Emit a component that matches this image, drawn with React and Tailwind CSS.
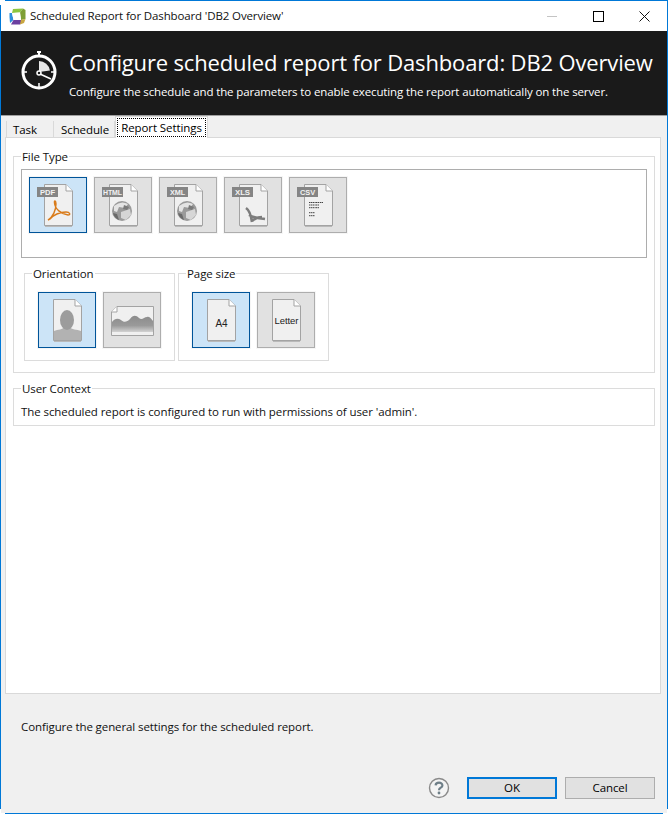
import React from "react";

function AppLogo() {
    return (
        <svg width="17" height="17" viewBox="0 0 17 17">
            <path d="M4 1 L14 0.5 L11 4.5 L3 5 Z" fill="#8cc63f" />
            <path d="M11 4.5 L14 0.5 L16.5 2 L16.5 11 L12 12 Z" fill="#7f9f35" />
            <path d="M0.5 5 L3 5 L4.5 12 L1 15 L0.5 9 Z" fill="#2d8fdc" />
            <path d="M3 5 L11 4.5 L12 12 L4.5 12 Z" fill="#ffffff" />
            <path d="M4.5 12 L12 12 L14 13 L11 16.5 L2 16.5 Z" fill="#6b3fa0" />
            <path d="M12 12 L16.5 11 L15 15 L11 16.5 Z" fill="#c9a640" />
        </svg>
    );
}

function Stopwatch() {
    return (
        <svg width="40" height="44" viewBox="0 0 40 44" className="text-white">
            <rect x="18" y="2" width="4" height="2" fill="currentColor" />
            <rect x="19" y="3" width="2" height="3" fill="currentColor" />
            <circle cx="20" cy="23" r="16" fill="none" stroke="currentColor" strokeWidth="3" />
            <path d="M20 12 A11.5 11.5 0 0 1 31 21.5 L20 23 Z" fill="currentColor" opacity="0.9" />
            <path d="M20 34 V38 M5 23 H8 M32 23 H35" stroke="currentColor" strokeWidth="1.5" />
            <circle cx="20" cy="24" r="2" fill="#1a1a1a" stroke="currentColor" strokeWidth="1.5" />
            <path d="M21 25 L32 30" stroke="currentColor" strokeWidth="1.5" />
        </svg>
    );
}

function Doc({ children }) {
    return (
        <g>
            <path d="M15.5 7.5 H37 L43.5 14 V48.5 H15.5 Z" fill="#f0f0f0" stroke="#a3a3a3" />
            <path d="M37 7.5 V14 H43.5" fill="#ffffff" stroke="#a3a3a3" />
            <path d="M16 49.5 H43" stroke="#b9b9b9" />
            {children}
        </g>
    );
}

function Tag({ text }) {
    return (
        <g>
            <rect x="8" y="10" width="21" height="10" fill="#858585" />
            <text x="18.5" y="18" textAnchor="middle" fontSize="8" fontWeight="700" fill="#f2f2f2" fontFamily="Liberation Sans, sans-serif" textLength={text.length > 3 ? 19 : 15} lengthAdjust="spacingAndGlyphs">{text}</text>
        </g>
    );
}

function Globe() {
    return (
        <g>
            <circle cx="28" cy="34" r="10" fill="#9a9a9a" />
            <path d="M20 29 Q27 23 34 27 L31 31 L25 30 L23 35 L20 34 Z" fill="#e4e4e4" />
            <path d="M27 35 L36 32 L37 38 L32 43 L27 41 Z" fill="#d6d6d6" />
            <path d="M19 36 L23 37 L25 43 Q20 41 19 36 Z" fill="#6a6a6a" />
            <path d="M30 28 L35 30 L33 33 L29 32 Z" fill="#7a7a7a" />
        </g>
    );
}

const ICONS = {
    pdf: (
        <Doc>
            <Tag text="PDF" />
            <path d="M19 43 C24 40 27 33 27 27 C27 23 25 23 25.5 26 C26 32 32 37 39 38 C42 38 41 35 37 35 C31 35 24 38 21 42 Z" fill="none" stroke="#d97b1a" strokeWidth="1.4" />
        </Doc>
    ),
    html: <Doc><Tag text="HTML" /><Globe /></Doc>,
    xml: <Doc><Tag text="XML" /><Globe /></Doc>,
    xls: (
        <Doc>
            <Tag text="XLS" />
            <path d="M22 31 C25 33 27 38 28 45 M25 38 C30 41 35 41 41 42 M28 44 C31 41 34 40 38 40" fill="none" stroke="#7d7d7d" strokeWidth="2.6" />
        </Doc>
    ),
    csv: (
        <Doc>
            <Tag text="CSV" />
            <path d="M20 25.5 H26.7 M27 25.5 H30.3 M31 25.5 H34 M20 28 H26.7 M27 28 H30 M20 30.7 H26.7 M27 30.7 H30 M20 35.7 H26 M20 38.7 H26" stroke="#444444" strokeWidth="1" strokeDasharray="1.5 0.5" />
        </Doc>
    ),
    portrait: (
        <Doc>
            <path d="M16 48 V39 C20 37 25 38 26 35 H32 C33 38 39 37 43 39 V48 Z" fill="#b2b2b2" />
            <ellipse cx="29" cy="28" rx="7" ry="10" fill="#9c9c9c" />
        </Doc>
    ),
    landscape: (
        <g>
            <defs>
                <linearGradient id="ridge" x1="0" y1="0" x2="0" y2="1">
                    <stop offset="0" stopColor="#8c8c8c" />
                    <stop offset="0.6" stopColor="#9a9a9a" />
                    <stop offset="1" stopColor="#d2d2d2" />
                </linearGradient>
            </defs>
            <path d="M14 14.5 H50.5 V43.5 H8.5 V20 Z" fill="#f0f0f0" stroke="#a3a3a3" />
            <path d="M14 14.5 V20 H8.5" fill="#ffffff" stroke="#a3a3a3" />
            <path d="M9 30 C12 26 15 26 18 28 C21 31 24 30 27 27 C30 23 33 23 36 26 C39 29 41 25 44 25 C47 24 48 27 50 29 V40 H9 Z" fill="url(#ridge)" />
        </g>
    ),
    a4: (
        <Doc>
            <text x="29.5" y="35" textAnchor="middle" fontSize="10" fill="#222222" fontFamily="Liberation Sans, sans-serif">A4</text>
        </Doc>
    ),
    letter: (
        <Doc>
            <text x="29.5" y="32" textAnchor="middle" fontSize="9.5" fill="#222222" fontFamily="Liberation Sans, sans-serif">Letter</text>
        </Doc>
    ),
};

function IconButton({ icon, selected }) {
    return (
        <button className={`w-[58px] h-[56px] border shadow-[0_0_0_1px_#f6f6f6] ${selected ? "bg-[#cce4f7] border-[#005499]" : "bg-[#e1e1e1] border-[#adadad]"}`}>
            <svg width="58" height="56" viewBox="0 0 58 56" className="-m-px">{ICONS[icon]}</svg>
        </button>
    );
}

function Group({ title, className, children }) {
    return (
        <fieldset className={`border border-[#dcdcdc] ${className}`}>
            <legend className="ml-[7px] px-[1px] h-4 leading-[18px] text-[#111111]">{title}</legend>
            {children}
        </fieldset>
    );
}

export default function App() {
    return (
        <div className="relative w-[668px] h-[814px] flex flex-col border border-[#0078d7] bg-[#f0f0f0] text-[11.5px] tracking-[-0.09px] text-black" style={{ fontFamily: "'Open Sans', sans-serif" }}>
            {/* the capture cuts the window's corners */}
            <span className="absolute -top-px -left-px w-[5px] h-px bg-white" />
            <span className="absolute -top-px -left-px w-px h-[5px] bg-white" />
            <span className="absolute -bottom-px -left-px w-[5px] h-px bg-white" />
            <span className="absolute -bottom-px -left-px w-px h-[5px] bg-white" />
            <span className="absolute -bottom-px -right-px w-[5px] h-px bg-white" />
            <span className="absolute -bottom-px -right-px w-px h-[5px] bg-white" />

            <div className="h-[30px] bg-white flex items-center shrink-0">
                <div className="ml-[8px] mr-[4px] flex"><AppLogo /></div>
                <div className="flex-1 text-[#111111] tracking-[-0.13px]">Scheduled Report for Dashboard 'DB2 Overview'</div>
                <div className="w-[46px] flex justify-center"><div className="w-[10px] h-px bg-[#c4c4c4]" /></div>
                <div className="w-[46px] flex justify-center"><div className="w-[11px] h-[11px] border border-black" /></div>
                <div className="w-[46px] flex justify-center">
                    <svg width="11" height="11" viewBox="0 0 11 11"><path d="M0.5 0.5 L10.5 10.5 M10.5 0.5 L0.5 10.5" stroke="#111111" /></svg>
                </div>
            </div>

            <div className="h-[85px] bg-[#1a1a1a] border-b border-[#a0a0a0] flex shrink-0 text-white">
                <div className="ml-[18px] mt-[18px] w-[40px] shrink-0"><Stopwatch /></div>
                <div className="ml-[10px]">
                    <div className="mt-[16px] text-[22px] tracking-[-0.15px] leading-[30px] whitespace-nowrap">Configure scheduled report for Dashboard: DB2 Overview</div>
                    <div className="mt-[7px] leading-4 whitespace-nowrap tracking-[-0.12px]">Configure the schedule and the parameters to enable executing the report automatically on the server.</div>
                </div>
            </div>

            <div className="h-[22px] flex items-end pl-[5px] shrink-0 relative z-10 -mb-px">
                <div className="w-[48px] h-[17px] border-l border-r border-[#d9d9d9] pl-[6px] leading-[18px]">Task</div>
                <div className="w-[61px] h-[17px] border-r border-[#d9d9d9] pl-[7px] leading-[18px]">Schedule</div>
                <div className="w-[93px] h-[22px] bg-white border border-b-0 border-[#d9d9d9] p-[1px]">
                    <div className="h-[19px] border border-dotted border-black text-center leading-[18px]">Report Settings</div>
                </div>
            </div>

            <div className="flex-1 ml-[4px] mr-[6px] bg-white border border-[#d9d9d9] pl-[7px] pr-[5px] pt-[10px] flex flex-col">
                <Group title="File Type" className="pb-[11px]">
                    <div className="mx-[7px] mt-[5px] h-[89px] border border-[#adadad] p-[7px] flex gap-[7px] items-start">
                        <IconButton icon="pdf" selected />
                        <IconButton icon="html" />
                        <IconButton icon="xml" />
                        <IconButton icon="xls" />
                        <IconButton icon="csv" />
                    </div>
                    <div className="ml-[10px] mt-[7px] flex gap-[3px]">
                        <Group title="Orientation" className="w-[151px]">
                            <div className="pl-[13px] mt-[11px] pb-[12px] flex gap-[7px]">
                                <IconButton icon="portrait" selected />
                                <IconButton icon="landscape" />
                            </div>
                        </Group>
                        <Group title="Page size" className="w-[151px]">
                            <div className="pl-[13px] mt-[11px] pb-[12px] flex gap-[7px]">
                                <IconButton icon="a4" selected />
                                <IconButton icon="letter" />
                            </div>
                        </Group>
                    </div>
                </Group>

                <Group title="User Context" className="mt-[7px] h-[46px]">
                    <div className="ml-[7px] mt-[8px] leading-4 text-[#111111] tracking-[-0.08px]">The scheduled report is configured to run with permissions of user 'admin'.</div>
                </Group>
            </div>

            <div className="h-[119px] shrink-0 flex flex-col">
                <div className="ml-[20px] mt-[25px] leading-4 text-[#111111] tracking-[-0.1px]">Configure the general settings for the scheduled report.</div>
                <div className="mt-auto mb-[14px] mr-[12px] flex justify-end items-center">
                    <svg width="22" height="22" viewBox="0 0 22 22" className="mr-[17px]">
                        <circle cx="11" cy="11" r="9.5" fill="#f4f4f4" stroke="#8a8a8a" strokeWidth="1.4" />
                        <path d="M7.6 8.4 C7.8 4.8 14.4 4.8 14.4 8.4 C14.4 10.8 11 10.6 11 13.2" fill="none" stroke="#6f7f88" strokeWidth="2.2" />
                        <circle cx="11" cy="16" r="1.4" fill="#6f7f88" />
                    </svg>
                    <button className="w-[90px] h-[22px] bg-[#e1e1e1] border-2 border-[#0078d7] leading-none">OK</button>
                    <button className="ml-[8px] w-[90px] h-[22px] bg-[#e1e1e1] border border-[#adadad] leading-none">Cancel</button>
                </div>
            </div>
        </div>
    );
}
